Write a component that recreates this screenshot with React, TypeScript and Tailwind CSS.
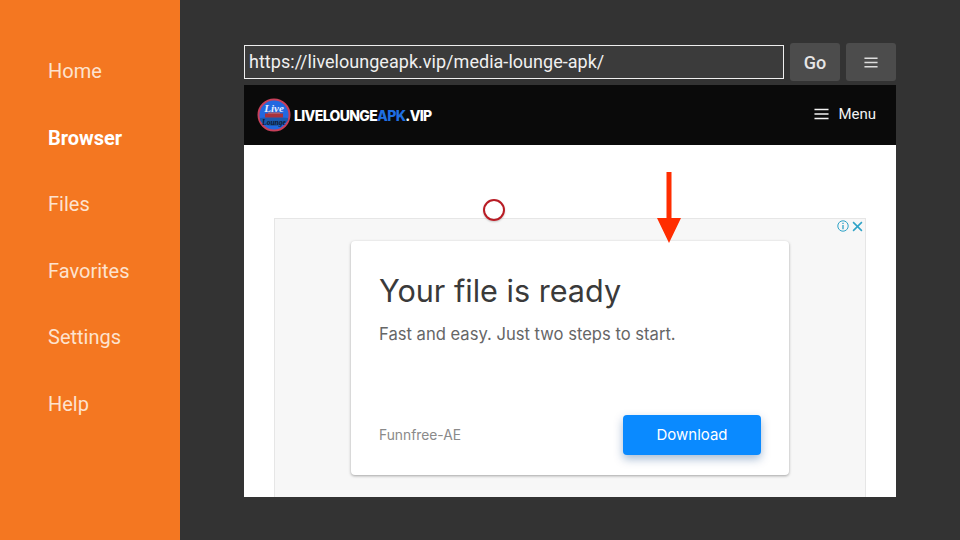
import React from "react";

const nav = ["Home", "Browser", "Files", "Favorites", "Settings", "Help"];

function Bars({ className }: { className: string }) {
  return (
    <svg viewBox="0 0 16 12" className={className} fill="none" stroke="currentColor" strokeWidth="1.7">
      <path d="M0.5 1.2H15.5M0.5 6H15.5M0.5 10.8H15.5" />
    </svg>
  );
}

function Logo() {
  return (
    <svg viewBox="0 0 34 34" className="h-[34px] w-[34px] shrink-0">
      <circle cx="17" cy="17" r="15.5" fill="#2268e0" stroke="#c8405a" strokeWidth="2" />
      <path d="M3 20C10 19 24 19 31 20V22C26 30 8 30 3 22Z" fill="#1a58ad" />
      <rect x="8" y="15.5" width="18" height="4" fill="#a8323c" />
      <rect x="11" y="14.5" width="12" height="1.2" fill="#d25a50" />
      <text x="17" y="13.5" textAnchor="middle" fontSize="11" fontStyle="italic" fontWeight="700" fill="#e4eeff" fontFamily="'Liberation Serif', serif">Live</text>
      <text x="17" y="27" textAnchor="middle" fontSize="7.5" fontStyle="italic" fontWeight="700" fill="#10182c" fontFamily="'Liberation Serif', serif">Lounge</text>
    </svg>
  );
}

export default function App() {
  return (
    <div className="relative flex h-[540px] w-[960px] overflow-hidden bg-[#333333] font-['Roboto',sans-serif]">
      <aside className="flex h-full w-[180px] shrink-0 flex-col bg-[#f47721] pl-[48px] pt-[38px]">
        {nav.map((n) => (
          <div
            key={n}
            className={`flex h-[66.5px] items-center text-[20px] ${n === "Browser" ? "font-bold text-white" : "text-[#fde3cf]"}`}
          >
            {n}
          </div>
        ))}
      </aside>

      <main className="flex flex-1 flex-col pl-[64px] pr-[64px] pt-[43px]">
        <div className="flex h-[38px] items-center">
          <div className="flex h-[34px] w-[540px] items-center border-[1.5px] border-[#eeeeee] bg-[#3b3b3b] pl-[4px] text-[18px] leading-none tracking-[0.03px] text-[#f0f0f0]">
            https://liveloungeapk.vip/media-lounge-apk/
          </div>
          <div className="ml-[6px] flex h-[38px] w-[50px] items-center justify-center rounded-[3px] bg-[#4c4c4c] text-[18px] font-medium text-[#e6e6e6]">
            Go
          </div>
          <div className="ml-[6px] flex h-[38px] w-[50px] items-center justify-center rounded-[3px] bg-[#4c4c4c] text-[#dddddd]">
            <Bars className="h-[13px] w-[14px]" />
          </div>
        </div>

        <div className="relative mt-[4px] flex h-[412px] w-[652px] flex-col overflow-hidden bg-white">
          <header className="flex h-[60px] shrink-0 items-center justify-between bg-[#0a0a0a] pl-[13px] pr-[20px]">
            <div className="flex items-center">
              <Logo />
              <span className="ml-[3px] font-['Inter',sans-serif] text-[14px] font-extrabold tracking-[-0.65px] text-white">
                LIVELOUNGE<span className="text-[#1f6fe0]">APK</span>.VIP
              </span>
            </div>
            <div className="flex items-center pb-[2px] text-[#f2f2f2]">
              <Bars className="h-[12px] w-[15px]" />
              <span className="ml-[9px] text-[15px] leading-[20px]">Menu</span>
            </div>
          </header>

          <div className="flex-1 px-[30px] pt-[73px]">
            <div className="relative h-[300px] border border-[#e6e6e6] bg-[#f7f7f7] px-[76px] pt-[22px]">
              <div className="absolute right-[2px] top-[1px] flex items-center gap-[3px] text-[#2fa3c7]">
                <svg viewBox="0 0 12 12" className="h-[12px] w-[12px]" fill="none" stroke="currentColor">
                  <circle cx="6" cy="6" r="5.2" strokeWidth="1" />
                  <path d="M6 5V9.3M6 2.7V4" strokeWidth="1.3" />
                </svg>
                <svg viewBox="0 0 10 10" className="h-[11px] w-[11px]" fill="none" stroke="currentColor" strokeWidth="1.4">
                  <path d="M1 1L9 9M9 1L1 9" />
                </svg>
              </div>
              <div className="flex h-[234px] w-[438px] flex-col rounded-[4px] bg-white px-[28px] shadow-[0_1px_3px_rgba(0,0,0,0.35)]">
                <div className="mt-[30px] font-['Inter',sans-serif] text-[30.6px] leading-[40px] text-[#3a3a3a]">
                  Your file is ready
                </div>
                <div className="mt-[12px] font-['Inter',sans-serif] text-[16.6px] leading-[22px] text-[#666666]">
                  Fast and easy. Just two steps to start.
                </div>
                <div className="mt-auto mb-[20px] flex items-center justify-between">
                  <span className="font-['Inter',sans-serif] text-[13.8px] text-[#8a8a8a]">Funnfree-AE</span>
                  <div className="flex h-[40px] w-[138px] items-center justify-center rounded-[4px] bg-[#0a8aff] font-['Inter',sans-serif] text-[15px] text-white shadow-[0_4px_10px_rgba(0,60,130,0.35)]">
                    Download
                  </div>
                </div>
              </div>
            </div>
          </div>
        </div>
      </main>

      <div className="absolute left-[483px] top-[199px] h-[22px] w-[22px] rounded-full border-2 border-[#b81c24] shadow-[0_1px_2px_rgba(0,0,0,0.2)]" />
      <svg viewBox="0 0 26 72" className="absolute left-[656px] top-[172px] h-[72px] w-[26px]">
        <path d="M10.5 0H15.5V46H25L13 71L1 46H10.5Z" fill="#ff2d00" />
      </svg>
    </div>
  );
}
